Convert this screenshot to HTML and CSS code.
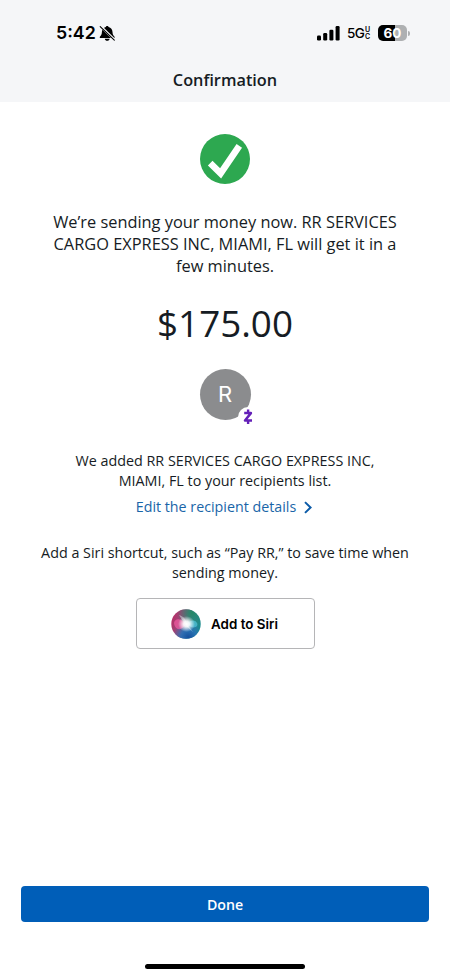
FILE: index.html
```html
<!DOCTYPE html>
<html lang="en">
<head>
<meta charset="utf-8">
<title>Confirmation</title>
<link rel="stylesheet" href="styles.css">
</head>
<body>
<div class="screen">
  <header class="header">
    <div class="status">
      <span class="time">5:42</span>
      <svg class="bell" width="17" height="17" viewBox="0 0 17 17">
        <path d="M8.200 1c-.8 0-1.300.5-1.400 1.100C4.500 2.700 3 4.600 2.900 7c-.1 2.300-.6 3.200-1.700 4.200-.8.800-.6 1.900.5 1.900h13c1.100 0 1.300-1.100.5-1.900-1.100-1-1.600-1.900-1.700-4.200-.1-2.400-1.600-4.300-3.900-4.900C9.500 1.500 9 1 8.200 1z"/>
        <path d="M5.800 13.700h4.800c-.2 1.300-1.200 2.100-2.400 2.100S6 15 5.800 13.700z"/>
        <path d="M1.700 1.400 15.600 14.800" stroke="#f5f6f8" stroke-width="2.400"/>
        <path d="M1.200 1.600 15.300 15.200" stroke="#000" stroke-width="1.100" stroke-linecap="round"/>
      </svg>
      <span class="spacer"></span>
      <svg class="signal" width="23" height="15" viewBox="0 0 23 15">
        <rect x="0" y="9.500" width="4" height="5" rx="1.200"/>
        <rect x="6.200" y="7" width="4" height="7.500" rx="1.200"/>
        <rect x="12.400" y="3.800" width="4" height="10.700" rx="1.200"/>
        <rect x="18.600" y="0" width="4" height="14.500" rx="1.200"/>
      </svg>
      <span class="network">5G</span>
      <span class="uc"><span>U</span><span>C</span></span>
      <span class="battery">60</span>
      <span class="nub"></span>
    </div>
    <h1 class="title">Confirmation</h1>
  </header>
  <main class="main">
    <svg class="check" width="50" height="50" viewBox="0 0 50 50">
      <circle cx="25" cy="25" r="25" fill="#2da850"/>
      <path d="M10.200 29.200 20.600 39.300 39.300 11.800" fill="none" stroke="#fff" stroke-width="6.600"/>
    </svg>
    <p class="message">We’re sending your money now. RR SERVICES<br>CARGO EXPRESS INC, MIAMI, FL will get it in a<br>few minutes.</p>
    <div class="amount">$175.00</div>
    <div class="avatar">R
      <span class="badge">
        <svg width="18" height="18" viewBox="0 0 18 18" fill="none" stroke="#6420b8">
          <path d="M5.200 5.100h6.700L6 12.500h7" stroke-width="2.500" stroke-linejoin="round"/>
          <path d="M9.100 1.600v3.500M9.100 12.500v3.500" stroke-width="2.400"/>
        </svg>
      </span>
    </div>
    <p class="note added">We added RR SERVICES CARGO EXPRESS INC,<br>MIAMI, FL to your recipients list.</p>
    <a class="link">Edit the recipient details
      <svg width="8" height="13" viewBox="0 0 8 13"><path d="M1 1.100 6.600 6.500 1 11.900" fill="none" stroke="#0c5ba8" stroke-width="2"/></svg>
    </a>
    <p class="note shortcut">Add a Siri shortcut, such as “Pay RR,” to save time when<br>sending money.</p>
    <button class="siri">
      <svg width="30" height="30" viewBox="0 0 30 30">
        <defs>
          <linearGradient id="base" x1="0" y1=".35" x2="1" y2=".65"><stop offset="0" stop-color="#b82d66"/><stop offset=".4" stop-color="#8b5380"/><stop offset=".65" stop-color="#35889b"/><stop offset="1" stop-color="#168b8b"/></linearGradient>
          <radialGradient id="top" cx=".7" cy=".12" r=".5"><stop offset="0" stop-color="#248866"/><stop offset="1" stop-color="#248866" stop-opacity="0"/></radialGradient>
          <radialGradient id="bottom" cx=".58" cy=".95" r=".52"><stop offset="0" stop-color="#174e9d"/><stop offset=".5" stop-color="#286fb8" stop-opacity=".85"/><stop offset="1" stop-color="#286fb8" stop-opacity="0"/></radialGradient>
          <radialGradient id="glow"><stop offset="0" stop-color="#fff"/><stop offset=".35" stop-color="#fff" stop-opacity=".9"/><stop offset="1" stop-color="#fff" stop-opacity="0"/></radialGradient>
        </defs>
        <circle cx="15" cy="15" r="14.700" fill="url(#base)"/>
        <circle cx="15" cy="15" r="14.700" fill="url(#top)"/>
        <circle cx="15" cy="15" r="14.700" fill="url(#bottom)"/>
        <path d="M3 14c1-5 7-5 12 1-4 7-11 7-12-1z" fill="#f45ba2" opacity=".7"/>
        <path d="M15 15c4-4 9-5 11-1s-4 7-11 1z" fill="#52c5dd" opacity=".7"/>
        <path d="M8 6c4 1 7 4 8 9l6 8-7-6z" fill="#e4eff2" opacity=".45"/>
        <ellipse cx="15.500" cy="15" rx="8.500" ry="8" fill="url(#glow)"/>
      </svg>
      <span>Add to Siri</span>
    </button>
  </main>
  <footer class="footer">
    <button class="done">Done</button>
    <div class="home"></div>
  </footer>
</div>
</body>
</html>
```
FILE: styles.css
```css
* { box-sizing: border-box; }
body { margin: 0; background: #fff; color: #161c24; font-family: "Open Sans", sans-serif; }
p, h1 { margin: 0; }
button { font: inherit; padding: 0; }
svg { display: block; flex: none; }
.screen { width: 450px; height: 978px; display: flex; flex-direction: column; white-space: nowrap; }
.header { height: 102px; background: #f5f6f8; padding-top: 18px; }
.status { height: 30px; padding: 0 40px 0 56px; display: flex; align-items: center; color: #000; font-family: Inter, sans-serif; }
.time { font-size: 17.8px; font-weight: 600; line-height: 30px; width: 43px; }
.spacer { flex: 1; }
.network { font-size: 13.5px; font-weight: 500; margin-left: 7px; width: 18px; letter-spacing: -0.7px; }
.uc { display: flex; flex-direction: column; font-size: 7px; line-height: 7px; font-weight: 600; width: 6px; }
.battery { width: 29px; height: 16px; margin-left: 7px; border-radius: 5px; background: linear-gradient(90deg, #000 60%, #aeb0b2 60%); color: #fff; font-size: 13.5px; line-height: 16px; font-weight: 700; text-align: center; }
.nub { width: 2px; height: 5px; margin-left: 1px; border-radius: 0 2px 2px 0; background: #aeb0b2; }
.title { height: 24px; margin-top: 20px; text-align: center; font-size: 16.3px; line-height: 24px; font-weight: 600; }
.main { flex: 1; display: flex; flex-direction: column; align-items: center; text-align: center; padding-top: 32px; }
.message { margin-top: 27px; font-size: 16.37px; line-height: 22px; }
.amount { margin-top: 21px; height: 50px; font-size: 36.8px; line-height: 50px; }
.avatar { position: relative; width: 51px; height: 51px; margin-top: 21px; border-radius: 50%; background: #8b8c8e; color: #fff; font: 22px/51px Inter, sans-serif; }
.badge { position: absolute; left: 38px; top: 38px; width: 20px; height: 20px; padding: 1px; border-radius: 50%; background: #fff; }
.note { font-size: 14.33px; line-height: 19.5px; }
.added { margin-top: 31px; }
.link { display: flex; align-items: center; gap: 8px; height: 20px; margin: 7px 2px 0 0; color: #1965a8; font-size: 14.28px; line-height: 20px; }
.shortcut { margin-top: 26px; }
.siri { width: 179px; height: 51px; margin-top: 16px; border: 1px solid #b5b5b7; border-radius: 4px; background: #fff; color: #000; display: flex; align-items: center; justify-content: center; gap: 10px; font: 600 13.4px Inter, sans-serif; }
.siri svg { margin-left: -1px; }
.footer { height: 92px; display: flex; flex-direction: column; align-items: center; }
.done { width: 408px; height: 36px; border: 0; border-radius: 4px; background: #005eb8; color: #fff; font-size: 14.2px; font-weight: 600; }
.home { width: 160px; height: 5px; margin-top: 42px; border-radius: 3px; background: #000; }
```
